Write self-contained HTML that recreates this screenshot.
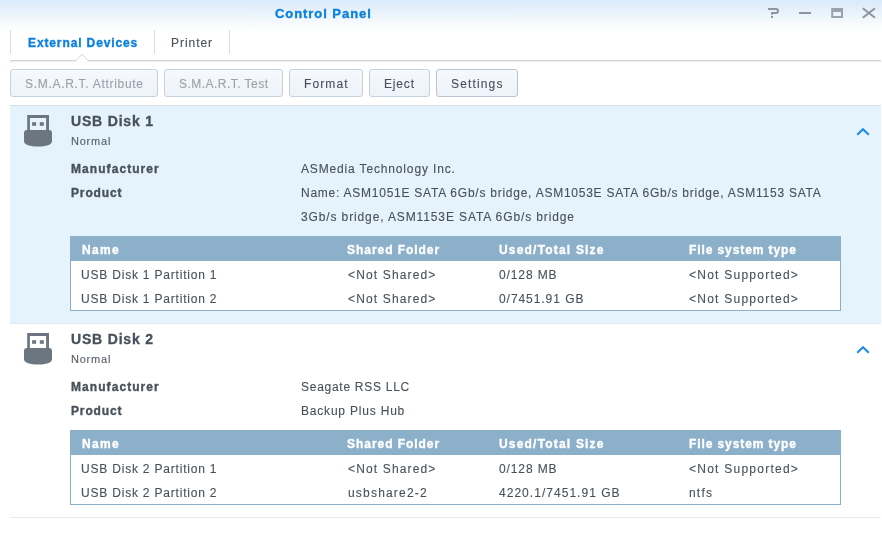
<!DOCTYPE html>
<html><head><meta charset="utf-8"><style>
html,body{margin:0;padding:0;}
body{width:882px;height:553px;position:relative;overflow:hidden;background:#fff;font-family:"Liberation Sans",sans-serif;}
.t{position:absolute;white-space:nowrap;will-change:transform;}
.ico{position:absolute;display:block;}
.abs{position:absolute;}
.titlebar{left:0;top:0;width:882px;height:30px;background:linear-gradient(#d9eaf9,#ffffff);}
.tabsep{width:1px;background:#d5dee8;top:30px;height:24px;}
.tabline{left:10px;top:60px;width:871px;height:1px;background:#cfd1d3;box-shadow:0 1px 0 #f1f2f3,0 2px 0 #f9f9fa;}
.btn{top:69px;height:26px;border:1px solid #c5d1dc;border-radius:3px;background:linear-gradient(#f6f9fd,#edf3f9);box-sizing:content-box;}
.sec1{left:10px;top:105px;width:871px;height:219px;background:#e5f3fd;border-top:1px solid #d5e0ea;border-bottom:1px solid #e3ebf2;box-sizing:border-box;}
.sec2bot{left:10px;top:517px;width:871px;height:1px;background:#e5eaef;}
.tbl{left:70px;width:771px;background:#fff;border:1px solid #8cafc9;box-sizing:border-box;}
.thead{left:70px;width:771px;height:25px;background:#8cb0ca;}
</style></head><body>
<div class="abs titlebar"></div>
<div class="abs tabsep" style="left:10px"></div>
<div class="abs tabsep" style="left:154px"></div>
<div class="abs tabsep" style="left:229px"></div>
<div class="abs tabline"></div>
<svg class="ico" style="left:74px;top:53px" width="16" height="9" viewBox="0 0 16 9"><path d="M2 7.5L8 1.5l6 6" fill="#fff" stroke="#cfd1d3" stroke-width="1"/><rect x="2.6" y="7" width="10.8" height="2" fill="#fff"/></svg>
<div class="abs btn" style="left:10px;width:146px"></div>
<div class="abs btn" style="left:164px;width:117px"></div>
<div class="abs btn" style="left:289px;width:72px"></div>
<div class="abs btn" style="left:369px;width:59px"></div>
<div class="abs btn" style="left:436px;width:80px;border-color:#b9c4cf"></div>
<div class="abs sec1"></div>
<div class="abs tbl" style="top:236px;height:75px"></div>
<div class="abs thead" style="top:236px"></div>
<div class="abs tbl" style="top:430px;height:75px"></div>
<div class="abs thead" style="top:430px"></div>
<div class="abs sec2bot"></div>
<svg class="ico" style="left:24px;top:115px" width="30" height="34" viewBox="0 0 30 34">
<path fill="#6c7680" d="M3.2 0h21.8v15H3.2z M5.9 3.1v11.9h16.2V3.1z"/>
<rect fill="#6c7680" x="8.1" y="7.2" width="4" height="3.6"/>
<rect fill="#6c7680" x="15.8" y="7.2" width="4" height="3.6"/>
<path fill="#6c7680" d="M0 18c0-2 1-3 3-3h22c2 0 3 1 3 3v8c0 4-6 5.5-14 5.5S0 30 0 26z"/>
</svg>
<svg class="ico" style="left:24px;top:333px" width="30" height="34" viewBox="0 0 30 34">
<path fill="#6c7680" d="M3.2 0h21.8v15H3.2z M5.9 3.1v11.9h16.2V3.1z"/>
<rect fill="#6c7680" x="8.1" y="7.2" width="4" height="3.6"/>
<rect fill="#6c7680" x="15.8" y="7.2" width="4" height="3.6"/>
<path fill="#6c7680" d="M0 18c0-2 1-3 3-3h22c2 0 3 1 3 3v8c0 4-6 5.5-14 5.5S0 30 0 26z"/>
</svg>
<svg class="ico" style="left:856px;top:128px" width="14" height="8" viewBox="0 0 14 8"><path d="M1.2 6.8L7 1.2l5.8 5.6" fill="none" stroke="#1a8ae6" stroke-width="2"/></svg>
<svg class="ico" style="left:856px;top:346px" width="14" height="8" viewBox="0 0 14 8"><path d="M1.2 6.8L7 1.2l5.8 5.6" fill="none" stroke="#1a8ae6" stroke-width="2"/></svg>
<svg class="ico" style="left:0;top:0" width="882" height="30" viewBox="0 0 882 30">
<g fill="none" stroke="#8e959d" stroke-width="2">
<path d="M768 9h8a2 2 0 0 1 0 4h-4v1.8"/>
<path d="M799 13h12"/>
<path d="M862.8 8.2l12.2 9.6M875 8.2l-12.2 9.6"/>
</g>
<rect x="771" y="16" width="2" height="2" fill="#8e959d"/>
<path fill="#9aa3ac" fill-rule="evenodd" d="M831.2 8H843v10H831.2z M833.2 12v4H841v-4z"/>
</svg>
<div class="t" style="left:275.20px;top:7.00px;font-size:13px;line-height:13px;font-weight:700;color:#0a80dd;letter-spacing:0.942px;-webkit-text-stroke:0.35px #0a80dd">Control Panel</div>
<div class="t" style="left:27.60px;top:37.00px;font-size:12px;line-height:12px;font-weight:700;color:#0a80dd;letter-spacing:0.881px;-webkit-text-stroke:0.35px #0a80dd">External Devices</div>
<div class="t" style="left:171.40px;top:37.00px;font-size:12px;line-height:12px;font-weight:400;color:#48515b;letter-spacing:0.959px;-webkit-text-stroke:0.12px #48515b">Printer</div>
<div class="t" style="left:25.30px;top:78.00px;font-size:12px;line-height:12px;font-weight:400;color:#9aa2aa;letter-spacing:0.700px;-webkit-text-stroke:0.12px #9aa2aa">S.M.A.R.T. Attribute</div>
<div class="t" style="left:179.10px;top:78.00px;font-size:12px;line-height:12px;font-weight:400;color:#9aa2aa;letter-spacing:0.468px;-webkit-text-stroke:0.12px #9aa2aa">S.M.A.R.T. Test</div>
<div class="t" style="left:304.10px;top:78.00px;font-size:12px;line-height:12px;font-weight:400;color:#48515b;letter-spacing:1.106px;-webkit-text-stroke:0.12px #48515b">Format</div>
<div class="t" style="left:384.10px;top:78.00px;font-size:12px;line-height:12px;font-weight:400;color:#48515b;letter-spacing:0.839px;-webkit-text-stroke:0.12px #48515b">Eject</div>
<div class="t" style="left:451.20px;top:78.00px;font-size:12px;line-height:12px;font-weight:400;color:#48515b;letter-spacing:1.149px;-webkit-text-stroke:0.12px #48515b">Settings</div>
<div class="t" style="left:70.50px;top:114.00px;font-size:14px;line-height:14px;font-weight:700;color:#48515b;letter-spacing:0.821px;-webkit-text-stroke:0.35px #48515b">USB Disk 1</div>
<div class="t" style="left:70.50px;top:136.00px;font-size:11px;line-height:11px;font-weight:400;color:#555e68;letter-spacing:0.779px;-webkit-text-stroke:0.12px #555e68">Normal</div>
<div class="t" style="left:70.70px;top:163.00px;font-size:12px;line-height:12px;font-weight:700;color:#48515b;letter-spacing:1.069px;-webkit-text-stroke:0.35px #48515b">Manufacturer</div>
<div class="t" style="left:70.50px;top:187.00px;font-size:12px;line-height:12px;font-weight:700;color:#48515b;letter-spacing:0.860px;-webkit-text-stroke:0.35px #48515b">Product</div>
<div class="t" style="left:301.10px;top:163.00px;font-size:12px;line-height:12px;font-weight:400;color:#48515b;letter-spacing:0.847px;-webkit-text-stroke:0.12px #48515b">ASMedia Technology Inc.</div>
<div class="t" style="left:301.10px;top:187.00px;font-size:12px;line-height:12px;font-weight:400;color:#48515b;letter-spacing:0.754px;-webkit-text-stroke:0.12px #48515b">Name: ASM1051E SATA 6Gb/s bridge, ASM1053E SATA 6Gb/s bridge, ASM1153 SATA</div>
<div class="t" style="left:301.10px;top:211.00px;font-size:12px;line-height:12px;font-weight:400;color:#48515b;letter-spacing:0.876px;-webkit-text-stroke:0.12px #48515b">3Gb/s bridge, ASM1153E SATA 6Gb/s bridge</div>
<div class="t" style="left:81.70px;top:244.00px;font-size:12px;line-height:12px;font-weight:700;color:#ffffff;letter-spacing:1.297px;-webkit-text-stroke:0.35px #ffffff">Name</div>
<div class="t" style="left:347.40px;top:244.00px;font-size:12px;line-height:12px;font-weight:700;color:#ffffff;letter-spacing:0.957px;-webkit-text-stroke:0.35px #ffffff">Shared Folder</div>
<div class="t" style="left:498.50px;top:244.00px;font-size:12px;line-height:12px;font-weight:700;color:#ffffff;letter-spacing:1.191px;-webkit-text-stroke:0.35px #ffffff">Used/Total Size</div>
<div class="t" style="left:688.50px;top:244.00px;font-size:12px;line-height:12px;font-weight:700;color:#ffffff;letter-spacing:0.907px;-webkit-text-stroke:0.35px #ffffff">File system type</div>
<div class="t" style="left:81.10px;top:269.00px;font-size:12px;line-height:12px;font-weight:400;color:#48515b;letter-spacing:0.799px;-webkit-text-stroke:0.12px #48515b">USB Disk 1 Partition 1</div>
<div class="t" style="left:348.00px;top:269.00px;font-size:12px;line-height:12px;font-weight:400;color:#48515b;letter-spacing:1.144px;-webkit-text-stroke:0.12px #48515b">&lt;Not Shared&gt;</div>
<div class="t" style="left:498.50px;top:269.00px;font-size:12px;line-height:12px;font-weight:400;color:#48515b;letter-spacing:0.892px;-webkit-text-stroke:0.12px #48515b">0/128 MB</div>
<div class="t" style="left:688.50px;top:269.00px;font-size:12px;line-height:12px;font-weight:400;color:#48515b;letter-spacing:1.243px;-webkit-text-stroke:0.12px #48515b">&lt;Not Supported&gt;</div>
<div class="t" style="left:81.10px;top:293.00px;font-size:12px;line-height:12px;font-weight:400;color:#48515b;letter-spacing:0.799px;-webkit-text-stroke:0.12px #48515b">USB Disk 1 Partition 2</div>
<div class="t" style="left:348.00px;top:293.00px;font-size:12px;line-height:12px;font-weight:400;color:#48515b;letter-spacing:1.144px;-webkit-text-stroke:0.12px #48515b">&lt;Not Shared&gt;</div>
<div class="t" style="left:498.50px;top:293.00px;font-size:12px;line-height:12px;font-weight:400;color:#48515b;letter-spacing:0.941px;-webkit-text-stroke:0.12px #48515b">0/7451.91 GB</div>
<div class="t" style="left:688.50px;top:293.00px;font-size:12px;line-height:12px;font-weight:400;color:#48515b;letter-spacing:1.243px;-webkit-text-stroke:0.12px #48515b">&lt;Not Supported&gt;</div>
<div class="t" style="left:70.50px;top:332.00px;font-size:14px;line-height:14px;font-weight:700;color:#48515b;letter-spacing:0.821px;-webkit-text-stroke:0.35px #48515b">USB Disk 2</div>
<div class="t" style="left:70.50px;top:354.00px;font-size:11px;line-height:11px;font-weight:400;color:#555e68;letter-spacing:0.779px;-webkit-text-stroke:0.12px #555e68">Normal</div>
<div class="t" style="left:70.70px;top:381.00px;font-size:12px;line-height:12px;font-weight:700;color:#48515b;letter-spacing:1.069px;-webkit-text-stroke:0.35px #48515b">Manufacturer</div>
<div class="t" style="left:70.50px;top:405.00px;font-size:12px;line-height:12px;font-weight:700;color:#48515b;letter-spacing:0.860px;-webkit-text-stroke:0.35px #48515b">Product</div>
<div class="t" style="left:301.10px;top:381.00px;font-size:12px;line-height:12px;font-weight:400;color:#48515b;letter-spacing:0.728px;-webkit-text-stroke:0.12px #48515b">Seagate RSS LLC</div>
<div class="t" style="left:301.10px;top:405.00px;font-size:12px;line-height:12px;font-weight:400;color:#48515b;letter-spacing:0.802px;-webkit-text-stroke:0.12px #48515b">Backup Plus Hub</div>
<div class="t" style="left:81.70px;top:438.00px;font-size:12px;line-height:12px;font-weight:700;color:#ffffff;letter-spacing:1.297px;-webkit-text-stroke:0.35px #ffffff">Name</div>
<div class="t" style="left:347.40px;top:438.00px;font-size:12px;line-height:12px;font-weight:700;color:#ffffff;letter-spacing:0.957px;-webkit-text-stroke:0.35px #ffffff">Shared Folder</div>
<div class="t" style="left:498.50px;top:438.00px;font-size:12px;line-height:12px;font-weight:700;color:#ffffff;letter-spacing:1.191px;-webkit-text-stroke:0.35px #ffffff">Used/Total Size</div>
<div class="t" style="left:688.50px;top:438.00px;font-size:12px;line-height:12px;font-weight:700;color:#ffffff;letter-spacing:0.907px;-webkit-text-stroke:0.35px #ffffff">File system type</div>
<div class="t" style="left:81.10px;top:463.00px;font-size:12px;line-height:12px;font-weight:400;color:#48515b;letter-spacing:0.799px;-webkit-text-stroke:0.12px #48515b">USB Disk 2 Partition 1</div>
<div class="t" style="left:348.00px;top:463.00px;font-size:12px;line-height:12px;font-weight:400;color:#48515b;letter-spacing:1.144px;-webkit-text-stroke:0.12px #48515b">&lt;Not Shared&gt;</div>
<div class="t" style="left:498.50px;top:463.00px;font-size:12px;line-height:12px;font-weight:400;color:#48515b;letter-spacing:0.892px;-webkit-text-stroke:0.12px #48515b">0/128 MB</div>
<div class="t" style="left:688.50px;top:463.00px;font-size:12px;line-height:12px;font-weight:400;color:#48515b;letter-spacing:1.243px;-webkit-text-stroke:0.12px #48515b">&lt;Not Supported&gt;</div>
<div class="t" style="left:81.10px;top:487.00px;font-size:12px;line-height:12px;font-weight:400;color:#48515b;letter-spacing:0.799px;-webkit-text-stroke:0.12px #48515b">USB Disk 2 Partition 2</div>
<div class="t" style="left:348.00px;top:487.00px;font-size:12px;line-height:12px;font-weight:400;color:#48515b;letter-spacing:1.196px;-webkit-text-stroke:0.12px #48515b">usbshare2-2</div>
<div class="t" style="left:498.50px;top:487.00px;font-size:12px;line-height:12px;font-weight:400;color:#48515b;letter-spacing:1.032px;-webkit-text-stroke:0.12px #48515b">4220.1/7451.91 GB</div>
<div class="t" style="left:688.50px;top:487.00px;font-size:12px;line-height:12px;font-weight:400;color:#48515b;letter-spacing:1.186px;-webkit-text-stroke:0.12px #48515b">ntfs</div>
</body></html>
